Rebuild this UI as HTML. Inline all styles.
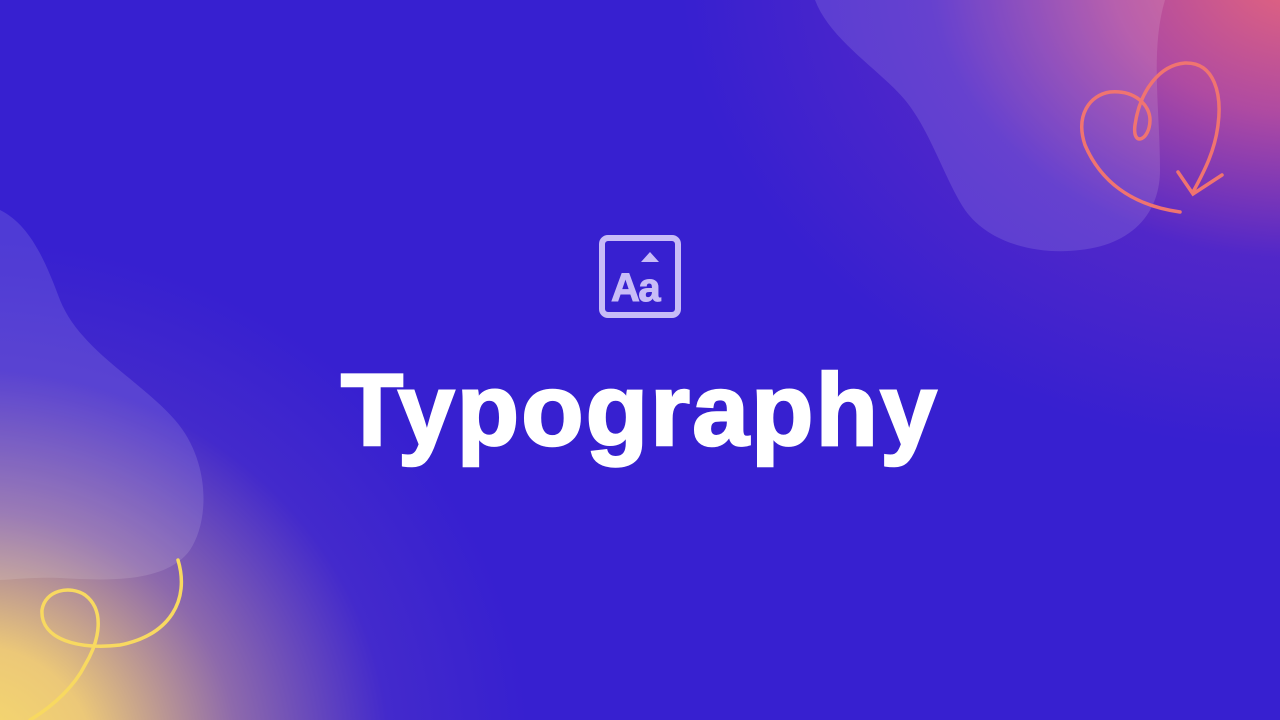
<!DOCTYPE html>
<html><head><meta charset="utf-8"><style>
html,body{margin:0;padding:0}
body{width:1280px;height:720px;overflow:hidden;position:relative;background:#3720d0;font-family:"Liberation Sans",sans-serif}
.bg{position:absolute;inset:0;background:
radial-gradient(ellipse 620px 480px at 1300px -30px,#e8667a 0%,rgba(205,85,150,.8) 30%,rgba(120,50,190,.4) 60%,rgba(80,40,200,0) 100%),
radial-gradient(ellipse 560px 520px at -30px 760px,#f8dc6a 0%,#ecc878 22%,rgba(170,130,160,.75) 48%,rgba(90,60,195,.35) 75%,rgba(60,35,205,0) 100%);}
svg{position:absolute;left:0;top:0}
.t{position:absolute;left:0;width:1280px;text-align:center;top:359px;font-size:102px;font-weight:bold;color:#fff;letter-spacing:2.2px;line-height:1;-webkit-text-stroke:2.5px #fff}
</style></head><body>
<div class="bg"></div>
<svg width="1280" height="720" viewBox="0 0 1280 720">
<path d="M815 0 C830 40 880 70 905 100 C930 130 945 180 965 210 C990 245 1040 255 1080 250 C1130 245 1160 215 1160 170 C1160 110 1150 50 1165 0 Z" fill="#ffffff" opacity=".12"/>
<path d="M0 210 C30 225 45 260 60 300 C80 350 140 380 175 420 C210 460 210 520 190 550 C165 585 100 580 60 578 C30 577 10 580 0 580 Z" fill="#ffffff" opacity=".12"/>
<path d="M1180 212 C1130 205 1100 180 1085 145 C1075 115 1090 95 1110 92 C1135 90 1150 105 1150 120 C1150 140 1132 148 1135 125 C1140 90 1160 65 1185 63 C1215 62 1222 95 1218 125 C1215 150 1205 170 1193 192 M1178 172 L1193 194 L1222 175" fill="none" stroke="#f07470" stroke-width="3.5" stroke-linecap="round"/>
<path d="M178 560 C190 600 170 635 120 645 C80 650 40 640 42 610 C45 590 70 585 85 595 C105 610 100 640 85 665 C75 685 55 705 30 720" fill="none" stroke="#f8d960" stroke-width="3.5" stroke-linecap="round"/>
<rect x="602" y="238" width="76" height="77" rx="6" fill="none" stroke="#c8bcf7" stroke-width="6"/>
<path d="M641 262 L650 252 L659 262 Z" fill="#c8bcf7"/>
<text x="611" y="301" font-family="Liberation Sans" font-weight="bold" font-size="40" fill="#c8bcf7" stroke="#c8bcf7" stroke-width="1" letter-spacing="-1.5">Aa</text>
</svg>
<div class="t">Typography</div>
</body></html>
